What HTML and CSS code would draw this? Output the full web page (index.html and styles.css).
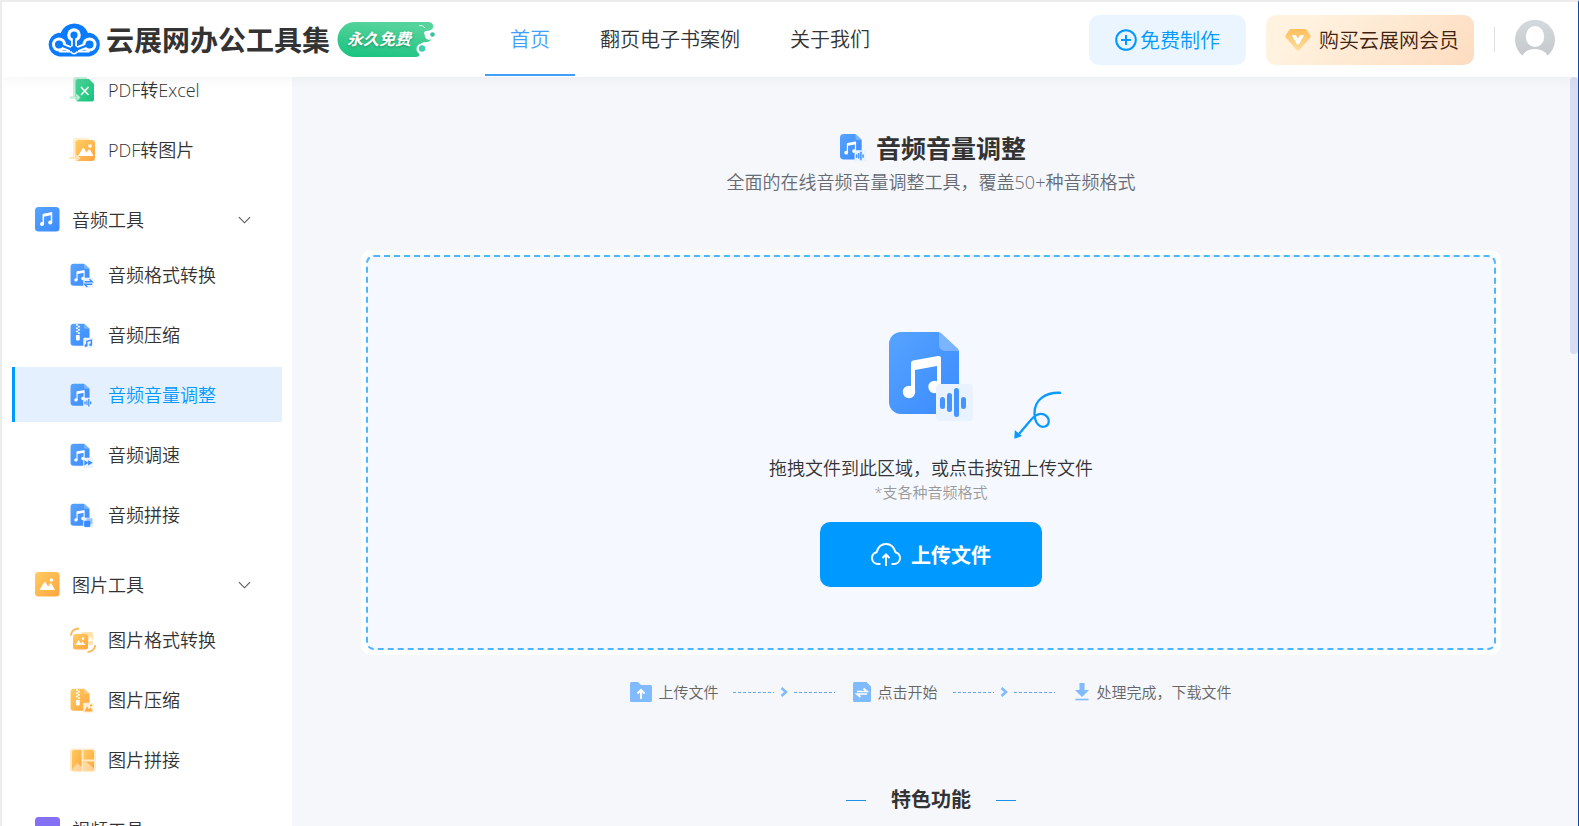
FILE: index.html
```html
<!DOCTYPE html>
<html lang="zh-CN">
<head>
<meta charset="utf-8">
<title>音频音量调整 - 云展网办公工具集</title>
<link rel="stylesheet" href="styles.css">
</head>
<body>
<svg class="defs" aria-hidden="true">
  <defs>
    <linearGradient id="gBlue" x1="0" y1="0" x2="1" y2="1"><stop offset="0" stop-color="#56a3ff"/><stop offset="1" stop-color="#3a8bff"/></linearGradient>
    <linearGradient id="gOrange" x1="0" y1="0" x2="1" y2="1"><stop offset="0" stop-color="#ffcc62"/><stop offset="1" stop-color="#ffa53e"/></linearGradient>
    <linearGradient id="gGreen" x1="0" y1="0" x2="1" y2="1"><stop offset="0" stop-color="#4fd699"/><stop offset="1" stop-color="#16c27c"/></linearGradient>
    <linearGradient id="gBadge" x1="0" y1="1" x2="0.3" y2="0"><stop offset="0" stop-color="#17c27f"/><stop offset="1" stop-color="#55d39c"/></linearGradient>
    <linearGradient id="gGem" x1="0" y1="0" x2="0" y2="1"><stop offset="0" stop-color="#ffbf5c"/><stop offset="1" stop-color="#ffdd9f"/></linearGradient>
    <linearGradient id="gGray" x1="0" y1="0" x2="0" y2="1"><stop offset="0" stop-color="#d3dadd"/><stop offset="1" stop-color="#c6c9cb"/></linearGradient>
    <path id="sheet" d="M12 0H49C51 0 52 1 53 2L68 16C69.500 17.500 70 18.500 70 20V82H12A12 12 0 0 1 0 70V12A12 12 0 0 1 12 0Z"/>
    <path id="fold" d="M50 0V13A6 6 0 0 0 56 19H70C70 18 69 17 68 16L53 2C52 1 51 0 50 0Z" fill="#fff" fill-opacity=".28"/>
    <g id="note" fill="#fff"><path d="M22 31Q22 29 24 28.500L49 24Q52 23.500 52 26V55H48V34L26 38V60H22Z"/><circle cx="20" cy="60" r="6.200"/><circle cx="45.500" cy="55" r="6.200"/></g>
    <g id="zip" fill="#fff"><path d="M20 2h7v6h-7zM27 8h7v6h-7zM20 14h7v6h-7zM27 20h7v6h-7zM20 26h7v6h-7zM27 32h7v6h-7z"/><rect x="20" y="42" width="14" height="20" rx="3"/></g>
    <g id="docNote"><use href="#sheet" fill="url(#gBlue)"/><use href="#fold"/><use href="#note"/><rect x="47" y="52" width="37" height="37" rx="4" fill="#e9f2ff"/></g>
    <g id="docVolume"><use href="#docNote"/><g fill="#4694ff"><rect x="51" y="65" width="5" height="12" rx="2.500"/><rect x="58" y="61" width="5" height="19" rx="2.500"/><rect x="65" y="56" width="5" height="29" rx="2.500"/><rect x="72" y="65" width="5" height="12" rx="2.500"/></g></g>
    <g id="hills"><path d="M4.500 18L9 10.500Q9.800 9.500 10.600 10.500L13 14.500L15 11.800Q15.800 11 16.600 11.800L20 18Z" fill="#fff"/><circle cx="16.500" cy="8" r="1.800" fill="#fff"/></g>
  </defs>
</svg>

<div class="app">
  <header class="topbar">
    <a class="brand" href="#">
      <svg class="brand-cloud" viewBox="0 0 54 34" aria-hidden="true">
        <path d="M12 33.500A12 12 0 0 1 11.500 9.800Q13 9.800 13.700 10A14.500 14.500 0 0 1 41 10Q42 9.700 43 9.800A12 12 0 0 1 42.500 33.500Z" fill="#0a7aff"/>
        <path d="M12 21.500L27 27.500L42.500 21.500M27 12V27" stroke="#fff" stroke-width="6" fill="none"/>
        <path d="M12 28.500H42.500" stroke="#fff" stroke-width="2"/>
        <g fill="#fff"><circle cx="27" cy="12" r="6.800"/><circle cx="12" cy="21.500" r="7"/><circle cx="42.500" cy="21.500" r="7"/></g>
        <path d="M12 21.500L27 27.500L42.500 21.500M27 12V27" stroke="#0a7aff" stroke-width="2.400" fill="none"/>
        <g fill="#0a7aff"><circle cx="27" cy="12" r="3.600"/><circle cx="12" cy="21.500" r="4"/><circle cx="42.500" cy="21.500" r="4"/><circle cx="27" cy="27" r="4"/></g>
        <path d="M23.500 28.500Q27 33 30.500 28.500" stroke="#fff" stroke-width="1.600" fill="none"/>
      </svg>
      <span class="brand-name">云展网办公工具集</span>
    </a>
    <span class="free-badge">
      <svg class="free-shape" viewBox="0 0 98 36" aria-hidden="true">
        <path d="M18 0H92Q97 1 96 6Q94 9 89 9Q86 10 87.500 12.500Q90 15 94 16Q95 19 90 20Q83 20 81 25Q79 29 82 31Q84 35 78 35H18A17.500 17.500 0 0 1 18 0Z" fill="url(#gBadge)"/>
        <circle cx="85" cy="27" r="5.500" fill="#fff"/><circle cx="85" cy="26.500" r="3.200" fill="#3fcfae"/>
        <circle cx="92" cy="13.500" r="4.200" fill="#fff"/><circle cx="95.500" cy="12.500" r="2.300" fill="#36c2a4"/>
        <path d="M82 3.500Q86 3 88 6" fill="none" stroke="#fff" stroke-width="1" stroke-opacity=".8"/>
      </svg>
      <span class="free-text">永久免费</span>
    </span>
    <nav class="nav">
      <a class="nav-link is-current" href="#">首页</a>
      <a class="nav-link" href="#">翻页电子书案例</a>
      <a class="nav-link" href="#">关于我们</a>
    </nav>
    <div class="actions">
      <button class="btn btn-create" type="button">
        <svg class="plus" viewBox="0 0 22 22" aria-hidden="true"><circle cx="11" cy="11" r="9.800"/><path d="M11 6V16M6 11H16"/></svg>
        <span>免费制作</span>
      </button>
      <button class="btn btn-vip" type="button">
        <svg class="gem" viewBox="0 0 26 22" aria-hidden="true"><path d="M6 0H20Q21 0 21.600 .8L25.500 6.500Q26 7.500 25.300 8.400L14 21.300Q13 22.300 12 21.300L.7 8.400Q0 7.500 .5 6.500L4.400 .8Q5 0 6 0Z" fill="url(#gGem)"/><path d="M7.500 6.500H10.500L13 10.500L15.500 6.500H18.500L13.700 15H12.300Z" fill="#fff" stroke="#fff"/></svg>
        <span>购买云展网会员</span>
      </button>
      <span class="divider"></span>
      <a class="avatar" href="#" aria-label="个人中心">
        <svg viewBox="0 0 40 40" aria-hidden="true"><path d="M7.500 35.500A20 20 0 1 1 32.500 35.500Q29 29 20 29Q11 29 7.500 35.500Z" fill="url(#gGray)"/><ellipse cx="20" cy="16.500" rx="9.200" ry="10.500" fill="#fff"/></svg>
      </a>
    </div>
  </header>

  <div class="body">
    <aside class="sidebar">
      <section class="group">
        <ul class="items">
          <li><a class="item" href="#">
            <svg class="icon" viewBox="0 0 26 26" aria-hidden="true"><path d="M3 18V3Q3 0 6 0H16L19 3V20H3Z" fill="#c5f0dc"/><path d="M8 2H19L24 7V22Q24 24.500 21.500 24.500H8Q5.500 24.500 5.500 22V4.500Q5.500 2 8 2Z" fill="url(#gGreen)"/><path d="M11 10L18.500 18M18.500 10L11 18" stroke="#fff" stroke-width="1.500"/><path d="M0 20.500H8M6 17.500L9.300 20.500L6 23.500" fill="none" stroke="#b5ecd2" stroke-width="1.800"/></svg>
            <span>PDF转Excel</span></a></li>
          <li><a class="item" href="#">
            <svg class="icon" viewBox="0 0 26 26" aria-hidden="true"><path d="M3 19V4Q3 1 6 1H18L21 4V20H3Z" fill="#ffedcc"/><rect x="5.500" y="3" width="19.500" height="21" rx="3" fill="url(#gOrange)"/><g transform="translate(3.500 1)"><use href="#hills"/></g><path d="M0 21H7.500M5.500 18L9 21L5.500 24" fill="none" stroke="#ffe3b5" stroke-width="1.800"/></svg>
            <span>PDF转图片</span></a></li>
        </ul>
      </section>

      <section class="group">
        <button class="group-head" type="button" aria-expanded="true">
          <svg class="icon-head" viewBox="0 0 25 25" aria-hidden="true"><rect width="24.500" height="24.500" rx="3.500" fill="url(#gBlue)"/><path d="M8.300 17V7.500L16.500 5.800V15.500" fill="none" stroke="#fff" stroke-width="1.500"/><path d="M8.300 8.500L16.500 6.800" stroke="#fff" stroke-width="2.600"/><circle cx="7" cy="17" r="2" fill="#fff"/><circle cx="15.200" cy="15.600" r="2" fill="#fff"/></svg>
          <span>音频工具</span>
          <svg class="chevron" viewBox="0 0 14 8" aria-hidden="true"><path d="M1 1L7 7L13 1"/></svg>
        </button>
        <ul class="items">
          <li><a class="item" href="#">
            <svg class="icon" viewBox="-2 -6 96 96" aria-hidden="true"><use href="#docNote"/><path d="M52 67H80L70 58M80 76H52L62 86" fill="none" stroke="#3a8bff" stroke-width="5"/></svg>
            <span>音频格式转换</span></a></li>
          <li><a class="item" href="#">
            <svg class="icon" viewBox="-2 -6 96 96" aria-hidden="true"><use href="#sheet" fill="url(#gBlue)"/><use href="#fold"/><use href="#zip"/><rect x="47" y="52" width="37" height="37" rx="4" fill="#e9f2ff"/><path d="M60 81V65L77 61V78" fill="none" stroke="#3a8bff" stroke-width="5"/><circle cx="57" cy="81" r="5" fill="#3a8bff"/><circle cx="74" cy="78" r="5" fill="#3a8bff"/></svg>
            <span>音频压缩</span></a></li>
          <li><a class="item is-active" href="#" aria-current="page">
            <svg class="icon" viewBox="-2 -6 96 96" aria-hidden="true"><use href="#docVolume"/></svg>
            <span>音频音量调整</span></a></li>
          <li><a class="item" href="#">
            <svg class="icon" viewBox="-2 -6 96 96" aria-hidden="true"><use href="#docNote"/><path d="M51 61L66 71L51 81ZM65 61L82 71L65 81Z" fill="#3a8bff"/></svg>
            <span>音频调速</span></a></li>
          <li><a class="item" href="#">
            <svg class="icon" viewBox="-2 -6 96 96" aria-hidden="true"><use href="#docNote"/><rect x="59" y="54" width="22" height="22" rx="3" fill="#9cc6ff"/><rect x="50" y="63" width="23" height="23" rx="3" fill="#3a8bff"/></svg>
            <span>音频拼接</span></a></li>
        </ul>
      </section>

      <section class="group">
        <button class="group-head" type="button" aria-expanded="true">
          <svg class="icon-head" viewBox="0 0 25 25" aria-hidden="true"><rect width="24.500" height="24.500" rx="3.500" fill="url(#gOrange)"/><use href="#hills"/></svg>
          <span>图片工具</span>
          <svg class="chevron" viewBox="0 0 14 8" aria-hidden="true"><path d="M1 1L7 7L13 1"/></svg>
        </button>
        <ul class="items">
          <li><a class="item" href="#">
            <svg class="icon" viewBox="0 0 26 26" aria-hidden="true"><rect x="11" y="5" width="12" height="13" rx="2" fill="#ffe2ae"/><path d="M18 14L20.500 9.500L23 14Z" fill="#fff"/><rect x="3" y="7" width="15" height="15.500" rx="2.500" fill="url(#gOrange)"/><path d="M5.500 18L8.500 13L11 16.500L12.500 14.500L15.500 18Z" fill="#fff"/><circle cx="13" cy="11.500" r="1.200" fill="#fff"/><path d="M.8 8.500Q1.500 2 9 1.500M25.200 18Q24.500 24.500 17.500 25" fill="none" stroke="#ffb95a" stroke-width="2"/></svg>
            <span>图片格式转换</span></a></li>
          <li><a class="item" href="#">
            <svg class="icon" viewBox="-2 -6 96 96" aria-hidden="true"><use href="#sheet" fill="url(#gOrange)"/><use href="#fold"/><use href="#zip"/><rect x="47" y="52" width="38" height="37" rx="4" fill="#fff0d6"/><path d="M51 84L61 66L68 76L73 69L82 84Z" fill="#ffab43"/><circle cx="76" cy="62" r="4" fill="#ffab43"/></svg>
            <span>图片压缩</span></a></li>
          <li><a class="item" href="#">
            <svg class="icon" viewBox="0 0 26 26" aria-hidden="true"><rect y="1.500" width="26" height="23.500" rx="3.500" fill="#ffeac8"/><path d="M4 3H11.500V23.500H4Q2 23.500 2 21.500V5Q2 3 4 3Z" fill="url(#gOrange)"/><path d="M13.500 3H22Q24 3 24 5V12.500H13.500ZM13.500 14.500H24V21.500Q24 23.500 22 23.500H13.500Z" fill="url(#gOrange)"/><path d="M2.500 21.500L7.500 16L11.500 20V23.500H4ZM13.500 16.500L16 14.500L24 21.500L22 23.500H13.500Z" fill="#fff" fill-opacity=".45"/></svg>
            <span>图片拼接</span></a></li>
        </ul>
      </section>

      <section class="group">
        <button class="group-head" type="button" aria-expanded="true">
          <svg class="icon-head" viewBox="0 0 25 25" aria-hidden="true"><rect width="25" height="25" rx="3.500" fill="#8470f5"/><path d="M9 9.500L17 13.500L9 17.500Z" fill="#fff"/></svg>
          <span>视频工具</span>
          <svg class="chevron" viewBox="0 0 14 8" aria-hidden="true"><path d="M1 1L7 7L13 1"/></svg>
        </button>
      </section>
    </aside>

    <main class="main">
      <h1 class="title">
        <svg class="title-icon" viewBox="0 0 84 90" aria-hidden="true"><use href="#docVolume"/></svg>
        <span>音频音量调整</span>
      </h1>
      <p class="subtitle">全面的在线音频音量调整工具，覆盖50+种音频格式</p>

      <section class="drop">
        <div class="drop-inner">
          <div class="drop-art">
            <svg class="drop-icon" viewBox="0 0 84 90" aria-hidden="true"><use href="#docVolume"/></svg>
            <svg class="swirl" viewBox="0 0 48 48" aria-hidden="true"><path d="M47 1.800C31 1 20 9 20.500 23C21 33 26 37 31 35.500C36 34 36 27 31 24C25 20.500 19 26 15.500 30.500L5 43" fill="none" stroke="#0a9aff" stroke-width="2.300"/><path d="M.3 47.800L.8 39L8 45Z" fill="#0a9aff"/></svg>
          </div>
          <p class="drop-text">拖拽文件到此区域，或点击按钮上传文件</p>
          <p class="drop-hint">*支各种音频格式</p>
          <button class="upload" type="button">
            <svg class="upload-icon" viewBox="0 0 30 23" aria-hidden="true"><path d="M9.500 21H7A6 6 0 0 1 5.500 9.200Q8 1 15 1Q22 1 24.500 9.200A6 6 0 0 1 23 21H20.500M15 23V11.500M11.500 15L15 11.500L18.500 15" /></svg>
            <span>上传文件</span>
          </button>
        </div>
      </section>

      <ol class="steps">
        <li class="step"><svg class="step-folder" viewBox="0 0 22 20" aria-hidden="true"><path d="M1.500 0H8L11 3H20.500Q22 3 22 4.500V18.500Q22 20 20.500 20H1.500Q0 20 0 18.500V1.500Q0 0 1.500 0Z" fill="#80baff"/><path d="M11 17V8M7.500 11.500L11 8L14.500 11.500" fill="none" stroke="#fff" stroke-width="2"/></svg><span>上传文件</span></li>
        <li class="link" aria-hidden="true"><svg class="dash" viewBox="0 0 41 1"><path d="M0 .5H41"/></svg><svg class="arrow" viewBox="0 0 8 10"><path d="M1.500 1L6 5L1.500 9"/></svg><svg class="dash" viewBox="0 0 41 1"><path d="M0 .5H41"/></svg></li>
        <li class="step"><svg class="step-doc" viewBox="0 0 18 20" aria-hidden="true"><path d="M1.500 0H13.500L18 4.500V18.500Q18 20 16.500 20H1.500Q0 20 0 18.500V1.500Q0 0 1.500 0Z" fill="#80baff"/><path d="M4 9.500H14L10.500 6.500M14 12H4L7.500 15" fill="none" stroke="#fff" stroke-width="1.700"/></svg><span>点击开始</span></li>
        <li class="link" aria-hidden="true"><svg class="dash" viewBox="0 0 41 1"><path d="M0 .5H41"/></svg><svg class="arrow" viewBox="0 0 8 10"><path d="M1.500 1L6 5L1.500 9"/></svg><svg class="dash" viewBox="0 0 41 1"><path d="M0 .5H41"/></svg></li>
        <li class="step"><svg class="step-down" viewBox="-2 0 18 18" aria-hidden="true"><path d="M4.500 0H9.500V7H14L7 14L0 7H4.500Z" fill="#80baff"/><path d="M.5 16.500H13.500" stroke="#80baff" stroke-width="1.600"/></svg><span>处理完成，下载文件</span></li>
      </ol>

      <h2 class="feature-title">特色功能</h2>
    </main>
    <div class="scroll"><div class="thumb"></div></div>
  </div>
</div>
</body>
</html>
```
FILE: styles.css
```css
* { box-sizing: border-box; }
body {
  margin: 0;
  font-family: "Open Sans", "Noto Sans CJK SC", sans-serif;
  font-weight: 350;
  color: #333;
}
button { font: inherit; color: inherit; border: 0; background: none; padding: 0; cursor: pointer; }
a { color: inherit; text-decoration: none; }
h1, h2, p, ul, ol { margin: 0; padding: 0; }
ul, ol { list-style: none; }
svg { display: block; flex: none; }
.defs { position: absolute; width: 0; height: 0; }

.app {
  display: flex;
  flex-direction: column;
  height: 100vh;
  overflow: hidden;
  border-top: 2px solid #ececec;
  border-left: 2px solid #ececec;
  border-right: 1px solid #0d4aa0;
  background: #f5f7fb;
}

/* top bar */
.topbar {
  flex: none;
  position: relative;
  z-index: 1;
  display: flex;
  align-items: center;
  height: 75px;
  padding: 0 23px 0 45px;
  background: #fff;
  box-shadow: 0 0 16px rgba(0, 0, 0, .06);
}
.brand { display: flex; align-items: center; gap: 5px; }
.brand-cloud { width: 54px; height: 34px; }
.brand-name { font-size: 28px; line-height: 40px; font-weight: 700; white-space: nowrap; }
.free-badge { position: relative; width: 98px; height: 36px; margin-left: 7px; flex: none; }
.free-shape { width: 98px; height: 36px; }
.free-text {
  position: absolute;
  left: 10px;
  top: 5px;
  font-size: 16px;
  line-height: 24px;
  font-weight: 700;
  font-style: italic;
  color: #fff;
  white-space: nowrap;
  text-shadow: 0 1px 2px rgba(0, 90, 50, .5);
}
.nav { display: flex; align-self: stretch; margin-left: 50px; }
.nav-link {
  display: flex;
  align-items: center;
  padding: 0 25px;
  font-size: 20px;
  white-space: nowrap;
  border-bottom: 2px solid transparent;
  margin-bottom: 1px;
}
.nav-link.is-current { color: #409eff; border-color: #409eff; }
.actions { display: flex; align-items: center; margin-left: auto; }
.btn {
  display: flex;
  align-items: center;
  height: 50px;
  border-radius: 10px;
  font-size: 20px;
  white-space: nowrap;
}
.btn-create { gap: 3px; padding: 0 26px; color: #0099ff; background: #ebf5ff; }
.plus { width: 22px; height: 22px; fill: none; stroke: #0099ff; stroke-width: 2; }
.btn-vip {
  gap: 8px;
  margin-left: 20px;
  padding: 0 15px 0 19px;
  color: #3f220f;
  background: linear-gradient(135deg, #fff3e0 15%, #fddcc0);
}
.gem { width: 26px; height: 22px; }
.divider { width: 1px; height: 25px; margin: 0 20px; background: #dcdfe6; }
.avatar svg { width: 40px; height: 40px; }

/* side menu */
.body { flex: 1; display: flex; min-height: 0; }
.sidebar {
  flex: none;
  width: 290px;
  padding: 0 10px;
  overflow: hidden;
  background: #fff;
  font-size: 18px;
}
.group { margin-bottom: 15px; }
.group:first-child { margin-top: -15px; }
.group-head {
  display: flex;
  align-items: center;
  gap: 12px;
  width: 100%;
  height: 55px;
  padding: 0 31px 0 23px;
  text-align: left;
}
.group-head span,
.item span { padding-bottom: 2px; }
.icon-head { width: 25px; height: 25px; }
.chevron { width: 13px; height: 8px; margin-left: auto; fill: none; stroke: #555; stroke-width: 1.2; }
.items { display: grid; gap: 5px; }
.item {
  display: flex;
  align-items: center;
  gap: 12px;
  height: 55px;
  padding-left: 55px;
  border-left: 3px solid transparent;
  white-space: nowrap;
}
.item.is-active { color: #0099ff; background: #e5f0ff; border-color: #0099ff; }
.icon { width: 26px; height: 26px; }

/* content */
.main { flex: 1; min-width: 0; overflow: hidden; padding: 51px 69px 0; text-align: center; }
.title {
  display: flex;
  align-items: center;
  justify-content: center;
  gap: 10px;
  padding-left: 4px;
  font-size: 25px;
  line-height: 40px;
  font-weight: 700;
}
.title-icon { width: 26px; height: 28px; }
.subtitle { font-size: 18px; line-height: 28px; color: #666b73; }
.drop { margin-top: 54px; padding: 5px; border-radius: 10px; background: #fff; }
.drop-inner {
  display: flex;
  flex-direction: column;
  align-items: center;
  padding: 75px 0 61px;
  border: 2px dashed #4db6ff;
  border-radius: 8px;
  background: #f5f9ff;
}
.drop-art { position: relative; }
.drop-icon { width: 84px; height: 90px; }
.swirl { position: absolute; left: 125px; top: 59px; width: 48px; height: 48px; }
.drop-text { margin-top: 32px; font-size: 18px; line-height: 28px; }
.drop-hint { font-size: 15px; line-height: 20px; color: #999; }
.upload {
  display: flex;
  align-items: center;
  justify-content: center;
  gap: 10px;
  width: 222px;
  height: 65px;
  margin-top: 20px;
  border-radius: 10px;
  font-size: 20px;
  font-weight: 700;
  color: #fff;
  background: #0099ff;
}
.upload-icon { width: 30px; height: 23px; fill: none; stroke: #fff; stroke-width: 2; }
.steps {
  display: flex;
  align-items: center;
  justify-content: center;
  margin-top: 27px;
  font-size: 15px;
  line-height: 20px;
  color: #666;
}
.step { display: flex; align-items: center; gap: 6px; white-space: nowrap; }
.step-folder { width: 22px; height: 20px; }
.step-doc { width: 18px; height: 20px; }
.step-down { width: 18px; height: 18px; }
.link { display: flex; align-items: center; gap: 6px; margin: 0 18px 0 15px; }
.dash { width: 41px; height: 1px; fill: none; stroke: #62a9f8; stroke-dasharray: 3 2; }
.arrow { width: 8px; height: 10px; fill: none; stroke: #80baff; stroke-width: 2.5; }
.feature-title {
  display: flex;
  align-items: center;
  justify-content: center;
  gap: 25px;
  margin-top: 83px;
  font-size: 20px;
  line-height: 30px;
  font-weight: 700;
}
.feature-title::before,
.feature-title::after { content: ""; width: 20px; height: 1px; background: #1a90e8; }
.scroll { flex: none; width: 8px; }
.thumb { height: 37%; border-radius: 4px; background: #d8ddf3; }
```
